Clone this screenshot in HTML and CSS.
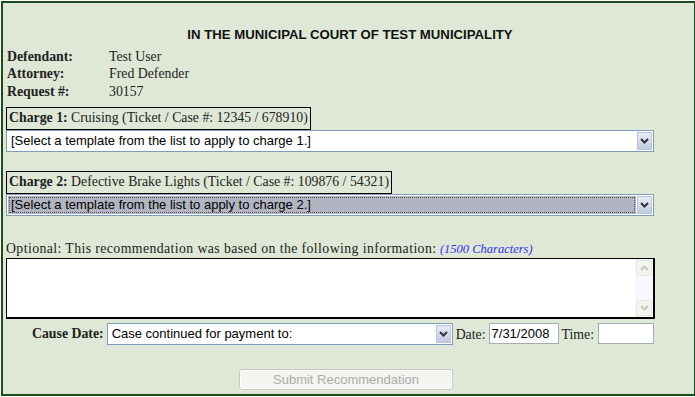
FILE: index.html
```html
<!DOCTYPE html>
<html lang="en">
<head>
  <meta charset="UTF-8">
  <title>Recommendation</title>
  <link rel="stylesheet" href="styles.css">
</head>
<body>
  <div class="panel">
    <h1 class="court">IN THE MUNICIPAL COURT OF TEST MUNICIPALITY</h1>
    <table class="info">
      <tr><th>Defendant:</th><td>Test User</td></tr>
      <tr><th>Attorney:</th><td>Fred Defender</td></tr>
      <tr><th>Request #:</th><td>30157</td></tr>
    </table>

    <div class="charge">
      <span class="charge-label"><b>Charge 1:</b> Cruising (Ticket / Case #: 12345 / 678910)</span>
      <div class="select">
        <span class="select-text">[Select a template from the list to apply to charge 1.]</span>
        <span class="select-btn"><svg width="9" height="6" viewBox="0 0 9 6"><path d="M1 1 L4.5 4.5 L8 1" fill="none" stroke="#333" stroke-width="2"/></svg></span>
      </div>
    </div>

    <div class="charge second">
      <span class="charge-label"><b>Charge 2:</b> Defective Brake Lights (Ticket / Case #: 109876 / 54321)</span>
      <div class="select focused">
        <span class="select-text">[Select a template from the list to apply to charge 2.]</span>
        <span class="select-btn"><svg width="9" height="6" viewBox="0 0 9 6"><path d="M1 1 L4.5 4.5 L8 1" fill="none" stroke="#333" stroke-width="2"/></svg></span>
      </div>
    </div>

    <p class="optional"><span class="optional-text">Optional: This recommendation was based on the following information:</span> <em>(1500 Characters)</em></p>
    <div class="textarea">
      <div class="scroll">
        <span class="scroll-btn"><svg width="9" height="6" viewBox="0 0 9 6"><path d="M1 5 L4.5 1.5 L8 5" fill="none" stroke="#c4cabb" stroke-width="2"/></svg></span>
        <span class="scroll-btn"><svg width="9" height="6" viewBox="0 0 9 6"><path d="M1 1 L4.5 4.5 L8 1" fill="none" stroke="#c4cabb" stroke-width="2"/></svg></span>
      </div>
    </div>

    <div class="cause">
      <b class="cause-label">Cause Date:</b>
      <div class="select cause-select">
        <span class="select-text">Case continued for payment to:</span>
        <span class="select-btn"><svg width="9" height="6" viewBox="0 0 9 6"><path d="M1 1 L4.5 4.5 L8 1" fill="none" stroke="#333" stroke-width="2"/></svg></span>
      </div>
      <span class="small-label">Date:</span>
      <span class="input date">7/31/2008</span>
      <span class="small-label">Time:</span>
      <span class="input time"></span>
    </div>

    <div class="actions">
      <span class="submit">Submit Recommendation</span>
    </div>
  </div>
</body>
</html>
```

FILE: styles.css
```css
body {
    margin: 0;
    font-family: 'Liberation Serif', serif;
    font-size: 13.8px;
    color: #222222;
}
.panel {
    width: 688px;
    height: 391px;
    margin: 1px 0 0 1px;
    border: 2px solid #1f4a1c;
    background-color: #dfe8d6;
    padding: 0 0 0 3px;
    box-sizing: content-box;
}
.court {
    font-family: 'Liberation Sans', sans-serif;
    font-size: 13.2px;
    font-weight: bold;
    text-align: center;
    margin: 0;
    padding: 24px 0 0 0;
    height: 20px;
    color: #111111;
}
.info {
    border-collapse: collapse;
    margin-top: 1px;
}
.info th, .info td {
    padding: 0;
    height: 17.5px;
    text-align: left;
    vertical-align: middle;
}
.info th {
    width: 102px;
    padding-left: 1px;
}
.charge {
    margin-top: 6px;
}
.charge.second {
    margin-top: 19px;
}
.charge-label {
    display: inline-block;
    border: 1px solid #000000;
    padding: 2px 2px 3px 2px;
    line-height: 16px;
}
.select {
    display: flex;
    align-items: center;
    width: 646px;
    height: 20px;
    border: 1px solid #7f9db9;
    background: #ffffff;
    font-family: 'Liberation Sans', sans-serif;
    font-size: 13px;
    color: #000000;
}
.select-text {
    flex: 1;
    padding-left: 4px;
    white-space: nowrap;
    overflow: hidden;
}
.focused .select-text {
    background: #b1b4c1;
    outline: 1px dotted #555555;
    outline-offset: -2px;
    height: 18px;
    line-height: 18px;
    margin: 1px;
    padding-left: 3px;
}
.select-btn {
    width: 15px;
    height: 18px;
    margin-right: 1px;
    border: 1px solid #b9c4d8;
    box-sizing: border-box;
    background: linear-gradient(#e8ebf8, #c2c9e2);
    display: flex;
    align-items: center;
    justify-content: center;
}
.optional {
    margin: 25px 0 0 0;
    line-height: 16px;
}
.optional-text {
    letter-spacing: 0.4px;
}
.optional em {
    color: #3030ee;
    font-size: 12.5px;
}
.textarea {
    width: 646px;
    height: 58px;
    border: 1px solid #000000;
    border-width: 1px 2px 2px 1px;
    background: #ffffff;
    display: flex;
    justify-content: flex-end;
    margin-top: 1px;
}
.scroll {
    width: 16px;
    background: #f7f8fe;
    display: flex;
    flex-direction: column;
    justify-content: space-between;
    padding: 1px;
}
.scroll-btn {
    height: 14px;
    border: 1px solid #e4e7dc;
    background: #f3f4ee;
    display: flex;
    align-items: center;
    justify-content: center;
    border-radius: 2px;
}
.cause {
    display: flex;
    align-items: center;
    margin-top: 4px;
    padding-left: 26px;
    height: 22px;
}
.cause-label {
    margin-right: 3px;
}
.cause-select {
    width: 344px;
    height: 20px;
}
.small-label {
    margin: 3px 3px 0 3px;
}
.input {
    height: 21px;
    border: 1px solid #a5acb2;
    background: #ffffff;
    box-sizing: border-box;
    font-family: 'Liberation Sans', sans-serif;
    font-size: 13px;
    color: #000000;
    padding: 2px 3px 0 2px;
}
.date {
    width: 70px;
}
.time {
    width: 56px;
    margin-left: 1px;
}
.actions {
    display: flex;
    justify-content: center;
    margin-top: 24px;
    padding-right: 8px;
}
.submit {
    width: 214px;
    height: 21px;
    box-sizing: border-box;
    border: 1px solid #c8ccc4;
    border-radius: 3px;
    background: #f4f4f0;
    box-shadow: inset 0 0 0 1px #ffffff;
    font-family: 'Liberation Sans', sans-serif;
    font-size: 13px;
    color: #acaca6;
    text-align: center;
    line-height: 19px;
}
```
